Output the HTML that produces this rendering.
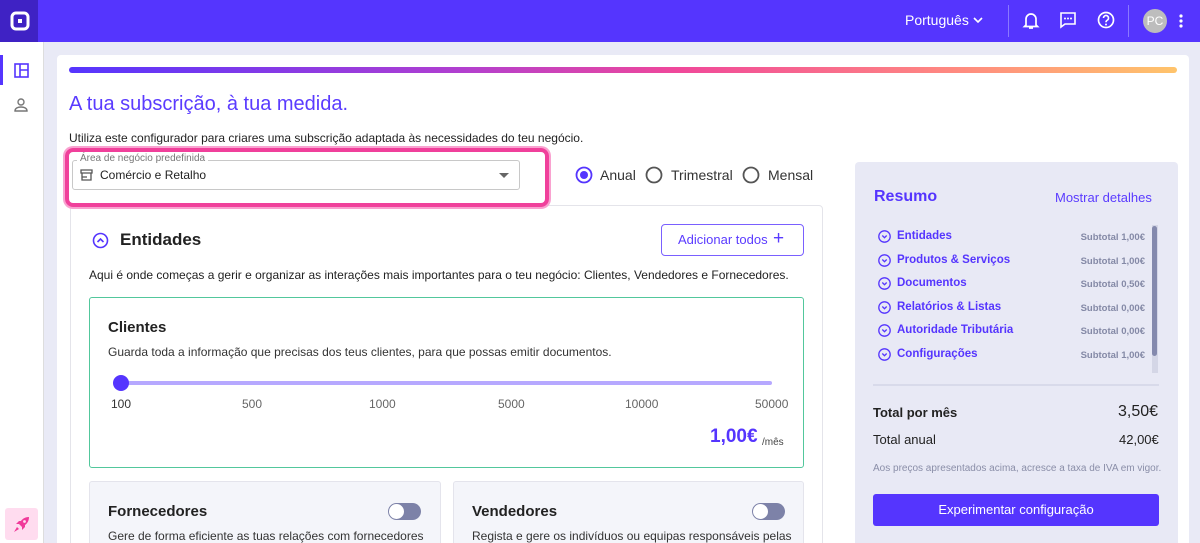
<!DOCTYPE html>
<html style="width:1200px;height:543px;overflow:hidden"><head><meta charset="utf-8"><style>
*{box-sizing:border-box;margin:0;padding:0}
body{width:1200px;height:543px;overflow:hidden;background:#e9eaf6;font-family:"Liberation Sans",sans-serif;color:#222;position:relative}
.abs{position:absolute}
.top{left:0;top:0;width:1200px;height:42px;background:#5535fe}
.logo{left:0;top:0;width:38px;height:42px;background:#3f22c4}
.side{left:0;top:42px;width:44px;height:501px;background:#fff;border-right:1px solid #ddd}
.card{left:57px;top:55px;width:1132px;height:488px;background:#fff;border-radius:4px 4px 0 0}
.txt{white-space:nowrap}
</style></head><body>
<div class="abs top"></div>
<div class="abs logo"><svg class="abs" style="left:10px;top:11px" width="20" height="20" viewBox="0 0 20 20"><rect x="2" y="2" width="16" height="16" rx="4" fill="none" stroke="#fff" stroke-width="3"/><rect x="8" y="8" width="4" height="4" fill="#fff"/></svg></div>
<div class="abs txt" style="left:905px;top:12px;color:#fff;font-size:14px">Português</div>
<svg class="abs" style="left:972px;top:15px" width="12" height="10"><path d="M2 3l4 4 4-4" stroke="#fff" stroke-width="1.6" fill="none"/></svg>
<div class="abs" style="left:1008px;top:5px;width:1px;height:32px;background:#8a78ff"></div>
<div class="abs" style="left:1128px;top:5px;width:1px;height:32px;background:#8a78ff"></div>
<svg class="abs" style="left:1022px;top:11px" width="18" height="20" viewBox="0 0 18 20"><path d="M4 14V8a5 5 0 0110 0v6l1.5 1.5h-13z M7 17h4" stroke="#fff" stroke-width="1.7" fill="none"/></svg>
<svg class="abs" style="left:1059px;top:11px" width="18" height="18" viewBox="0 0 18 18"><path d="M2 2h14v11H6l-4 3z" stroke="#fff" stroke-width="1.6" fill="none"/><circle cx="6" cy="7.5" r="1" fill="#fff"/><circle cx="9" cy="7.5" r="1" fill="#fff"/><circle cx="12" cy="7.5" r="1" fill="#fff"/></svg>
<svg class="abs" style="left:1097px;top:11px" width="18" height="18" viewBox="0 0 18 18"><circle cx="9" cy="9" r="7.5" stroke="#fff" stroke-width="1.7" fill="none"/><path d="M6.5 7a2.5 2.5 0 114 2c-1 .6-1.5 1-1.5 2.2" stroke="#fff" stroke-width="1.6" fill="none"/><circle cx="9" cy="13.5" r="1" fill="#fff"/></svg>
<div class="abs" style="left:1143px;top:9px;width:24px;height:24px;border-radius:50%;background:#bdbdbd;color:#fff;font-size:12px;text-align:center;line-height:24px">PC</div>
<svg class="abs" style="left:1178px;top:13px" width="6" height="16"><circle cx="3" cy="3" r="1.6" fill="#fff"/><circle cx="3" cy="8" r="1.6" fill="#fff"/><circle cx="3" cy="13" r="1.6" fill="#fff"/></svg>

<div class="abs side"></div>
<div class="abs" style="left:0;top:55px;width:3px;height:30px;background:#5535fe"></div>
<svg class="abs" style="left:14px;top:63px" width="15" height="15"><rect x="1" y="1" width="13" height="13" fill="none" stroke="#5535fe" stroke-width="1.6"/><path d="M6 1v13M6 7h8" stroke="#5535fe" stroke-width="1.6"/></svg>
<svg class="abs" style="left:13px;top:97px" width="16" height="16"><circle cx="8" cy="5" r="3" fill="none" stroke="#777" stroke-width="1.4"/><path d="M2 14c0-3 3-4 6-4s6 1 6 4z" fill="none" stroke="#777" stroke-width="1.4"/></svg>
<div class="abs" style="left:5px;top:508px;width:33px;height:32px;background:#ffdcef;border-radius:3px"></div>
<svg class="abs" style="left:12px;top:514px" width="20" height="20" viewBox="0 0 20 20"><path d="M17 3c-5 0-8 3-10 7l3 3c4-2 7-5 7-10z" fill="#f03a9a"/><circle cx="12.5" cy="7.5" r="1.4" fill="#ffdcef"/><path d="M7 10l-3 0 3-3h3zM10 13v3l3-3v-3z" fill="#f03a9a"/><path d="M5 13l-3 5 5-3z" fill="#f03a9a"/></svg>

<div class="abs card"></div>
<div class="abs" style="left:69px;top:67px;width:1108px;height:6px;border-radius:3px;background:linear-gradient(90deg,#5535fe,#b03fd0 35%,#f0489a 55%,#ff8a80 80%,#ffc46b)"></div>
<div class="abs txt" style="left:69px;top:93px;font-size:20px;color:#5a3bff">A tua subscrição, à tua medida.</div>
<div class="abs txt" style="left:69px;top:131px;font-size:12px;color:#222">Utiliza este configurador para criares uma subscrição adaptada às necessidades do teu negócio.</div>

<div class="abs" style="left:70px;top:205px;width:753px;height:350px;border:1px solid #e4e4ea;border-radius:4px"></div>
<div class="abs" style="left:65px;top:148px;width:484px;height:59px;border:4px solid #f0409b;border-radius:8px;box-shadow:0 0 0 2px #f9a2d0"></div>
<div class="abs" style="left:72px;top:160px;width:448px;height:30px;border:1px solid #c8c8c8;border-radius:3px;background:#fff"></div>
<div class="abs txt" style="left:77px;top:153px;font-size:10px;color:#777;background:#fff;padding:0 3px">Área de negócio predefinida</div>
<svg class="abs" style="left:80px;top:169px" width="13" height="12"><path d="M1 1h11v3H1zM2 4v7h9V4M2 8h5" stroke="#555" stroke-width="1.3" fill="none"/></svg>
<div class="abs txt" style="left:100px;top:168px;font-size:12px;color:#222">Comércio e Retalho</div>
<svg class="abs" style="left:499px;top:173px" width="10" height="6"><path d="M0 0h10L5 5z" fill="#666"/></svg>

<svg class="abs" style="left:575px;top:166px" width="18" height="18"><circle cx="9" cy="9" r="7.5" fill="none" stroke="#5535fe" stroke-width="1.8"/><circle cx="9" cy="9" r="4" fill="#5535fe"/></svg>
<div class="abs txt" style="left:600px;top:167px;font-size:14px;color:#333">Anual</div>
<svg class="abs" style="left:645px;top:166px" width="18" height="18"><circle cx="9" cy="9" r="7.5" fill="none" stroke="#555" stroke-width="1.8"/></svg>
<div class="abs txt" style="left:671px;top:167px;font-size:14px;color:#333">Trimestral</div>
<svg class="abs" style="left:742px;top:166px" width="18" height="18"><circle cx="9" cy="9" r="7.5" fill="none" stroke="#555" stroke-width="1.8"/></svg>
<div class="abs txt" style="left:768px;top:167px;font-size:14px;color:#333">Mensal</div>

<svg class="abs" style="left:92px;top:232px" width="17" height="17"><circle cx="8.5" cy="8.5" r="7" fill="none" stroke="#5535fe" stroke-width="1.6"/><path d="M5.5 10l3-3 3 3" stroke="#5535fe" stroke-width="1.6" fill="none"/></svg>
<div class="abs txt" style="left:120px;top:230px;font-size:17px;font-weight:bold;color:#222">Entidades</div>
<div class="abs" style="left:661px;top:224px;width:143px;height:32px;border:1px solid #7a60ff;border-radius:4px"></div>
<div class="abs txt" style="left:678px;top:232px;font-size:13px;color:#5a3bff">Adicionar todos</div>
<div class="abs txt" style="left:773px;top:228px;font-size:19px;color:#5a3bff">+</div>
<div class="abs txt" style="left:89px;top:268px;font-size:12px;color:#222">Aqui é onde começas a gerir e organizar as interações mais importantes para o teu negócio: Clientes, Vendedores e Fornecedores.</div>

<div class="abs" style="left:89px;top:297px;width:715px;height:171px;border:1.5px solid #52c79c;border-radius:3px"></div>
<div class="abs txt" style="left:108px;top:319px;font-size:15px;font-weight:bold;color:#222">Clientes</div>
<div class="abs txt" style="left:108px;top:345px;font-size:12px;color:#333">Guarda toda a informação que precisas dos teus clientes, para que possas emitir documentos.</div>
<div class="abs" style="left:120px;top:381px;width:652px;height:4px;background:#b6a8ff;border-radius:2px"></div>
<div class="abs" style="left:113px;top:375px;width:16px;height:16px;border-radius:50%;background:#5535fe"></div>
<div class="abs txt" style="left:111px;top:397px;font-size:12px;color:#333">100</div>
<div class="abs txt" style="left:242px;top:397px;font-size:12px;color:#666">500</div>
<div class="abs txt" style="left:369px;top:397px;font-size:12px;color:#666">1000</div>
<div class="abs txt" style="left:498px;top:397px;font-size:12px;color:#666">5000</div>
<div class="abs txt" style="left:625px;top:397px;font-size:12px;color:#666">10000</div>
<div class="abs txt" style="left:755px;top:397px;font-size:12px;color:#666">50000</div>
<div class="abs txt" style="left:710px;top:426px;font-size:19px;font-weight:bold;color:#5535fe">1,00€</div>
<div class="abs txt" style="left:762px;top:437px;font-size:10px;color:#444">/mês</div>

<div class="abs" style="left:89px;top:481px;width:352px;height:80px;background:#f4f5fa;border:1px solid #e4e4ec;border-radius:3px"></div>
<div class="abs" style="left:453px;top:481px;width:351px;height:80px;background:#f4f5fa;border:1px solid #e4e4ec;border-radius:3px"></div>
<div class="abs txt" style="left:108px;top:503px;font-size:15px;font-weight:bold;color:#222">Fornecedores</div>
<div class="abs txt" style="left:472px;top:503px;font-size:15px;font-weight:bold;color:#222">Vendedores</div>
<div class="abs txt" style="left:108px;top:529px;font-size:12px;color:#333">Gere de forma eficiente as tuas relações com fornecedores</div>
<div class="abs txt" style="left:472px;top:529px;font-size:12px;color:#333">Regista e gere os indivíduos ou equipas responsáveis pelas</div>
<div class="abs" style="left:388px;top:503px;width:33px;height:17px;border-radius:9px;background:#7d82a8"></div>
<div class="abs" style="left:389px;top:504px;width:15px;height:15px;border-radius:50%;background:#fff"></div>
<div class="abs" style="left:752px;top:503px;width:33px;height:17px;border-radius:9px;background:#7d82a8"></div>
<div class="abs" style="left:753px;top:504px;width:15px;height:15px;border-radius:50%;background:#fff"></div>

<div class="abs" style="left:855px;top:162px;width:323px;height:400px;background:#e8e9f5;border-radius:4px"></div>
<div class="abs txt" style="left:874px;top:188px;font-size:16px;font-weight:bold;color:#5535fe">Resumo</div>
<div class="abs txt" style="left:1055px;top:190px;font-size:13px;color:#5a3bff">Mostrar detalhes</div>
<div class="abs" style="left:1152px;top:225px;width:6px;height:148px;background:#d4d6e6"></div>
<div class="abs" style="left:1152px;top:226px;width:5px;height:130px;background:#8489ad;border-radius:3px"></div>
<div class="abs" style="left:873px;top:384px;width:286px;height:2px;background:#d8daea"></div>
<div class="abs txt" style="left:873px;top:405px;font-size:13px;font-weight:bold;color:#222">Total por mês</div>
<div class="abs txt" style="left:1118px;top:403px;font-size:16px;color:#222">3,50€</div>
<div class="abs txt" style="left:873px;top:432px;font-size:13px;color:#222">Total anual</div>
<div class="abs txt" style="left:1119px;top:432px;font-size:13px;color:#222">42,00€</div>
<div class="abs txt" style="left:873px;top:463px;font-size:10px;color:#8a8ea8">Aos preços apresentados acima, acresce a taxa de IVA em vigor.</div>
<div class="abs" style="left:873px;top:494px;width:286px;height:32px;background:#5535fe;border-radius:3px;color:#fff;font-size:13px;text-align:center;line-height:32px">Experimentar configuração</div>

<div class="abs" style="left:878px;top:230px;width:267px;font-size:11px">
<div style="height:23.6px;position:relative"><svg width="13" height="13" style="position:absolute;left:0;top:0"><circle cx="6.5" cy="6.5" r="5.7" fill="none" stroke="#5535fe" stroke-width="1.3"/><path d="M4.3 5.5l2.2 2.2 2.2-2.2" stroke="#5535fe" stroke-width="1.3" fill="none"/></svg><b style="position:absolute;left:19px;top:0;color:#5535fe;font-size:11.5px">Entidades</b><b style="position:absolute;right:0;top:2px;color:#8489a6;font-size:9.5px">Subtotal 1,00€</b></div>
<div style="height:23.6px;position:relative"><svg width="13" height="13" style="position:absolute;left:0;top:0"><circle cx="6.5" cy="6.5" r="5.7" fill="none" stroke="#5535fe" stroke-width="1.3"/><path d="M4.3 5.5l2.2 2.2 2.2-2.2" stroke="#5535fe" stroke-width="1.3" fill="none"/></svg><b style="position:absolute;left:19px;top:0;color:#5535fe;font-size:11.5px">Produtos &amp; Serviços</b><b style="position:absolute;right:0;top:2px;color:#8489a6;font-size:9.5px">Subtotal 1,00€</b></div>
<div style="height:23.6px;position:relative"><svg width="13" height="13" style="position:absolute;left:0;top:0"><circle cx="6.5" cy="6.5" r="5.7" fill="none" stroke="#5535fe" stroke-width="1.3"/><path d="M4.3 5.5l2.2 2.2 2.2-2.2" stroke="#5535fe" stroke-width="1.3" fill="none"/></svg><b style="position:absolute;left:19px;top:0;color:#5535fe;font-size:11.5px">Documentos</b><b style="position:absolute;right:0;top:2px;color:#8489a6;font-size:9.5px">Subtotal 0,50€</b></div>
<div style="height:23.6px;position:relative"><svg width="13" height="13" style="position:absolute;left:0;top:0"><circle cx="6.5" cy="6.5" r="5.7" fill="none" stroke="#5535fe" stroke-width="1.3"/><path d="M4.3 5.5l2.2 2.2 2.2-2.2" stroke="#5535fe" stroke-width="1.3" fill="none"/></svg><b style="position:absolute;left:19px;top:0;color:#5535fe;font-size:11.5px">Relatórios &amp; Listas</b><b style="position:absolute;right:0;top:2px;color:#8489a6;font-size:9.5px">Subtotal 0,00€</b></div>
<div style="height:23.6px;position:relative"><svg width="13" height="13" style="position:absolute;left:0;top:0"><circle cx="6.5" cy="6.5" r="5.7" fill="none" stroke="#5535fe" stroke-width="1.3"/><path d="M4.3 5.5l2.2 2.2 2.2-2.2" stroke="#5535fe" stroke-width="1.3" fill="none"/></svg><b style="position:absolute;left:19px;top:0;color:#5535fe;font-size:11.5px">Autoridade Tributária</b><b style="position:absolute;right:0;top:2px;color:#8489a6;font-size:9.5px">Subtotal 0,00€</b></div>
<div style="height:23.6px;position:relative"><svg width="13" height="13" style="position:absolute;left:0;top:0"><circle cx="6.5" cy="6.5" r="5.7" fill="none" stroke="#5535fe" stroke-width="1.3"/><path d="M4.3 5.5l2.2 2.2 2.2-2.2" stroke="#5535fe" stroke-width="1.3" fill="none"/></svg><b style="position:absolute;left:19px;top:0;color:#5535fe;font-size:11.5px">Configurações</b><b style="position:absolute;right:0;top:2px;color:#8489a6;font-size:9.5px">Subtotal 1,00€</b></div>
</div>
</body></html>
